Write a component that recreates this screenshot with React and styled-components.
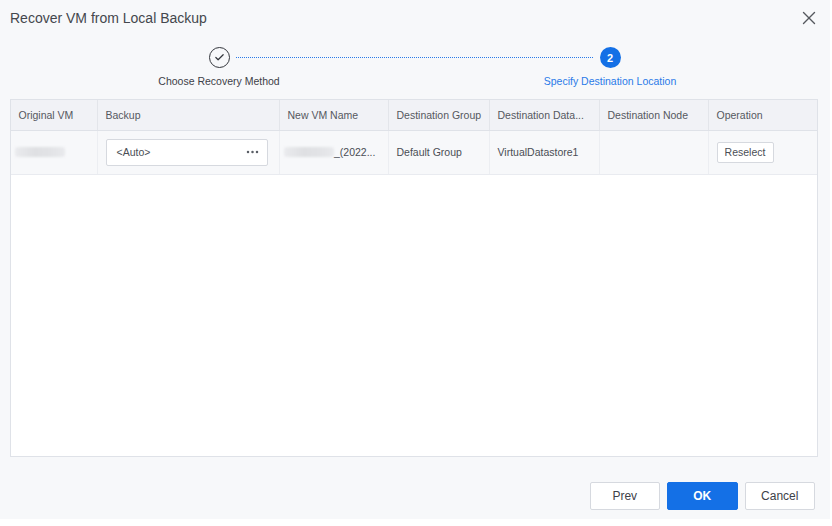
import React from 'react';
import styled, { createGlobalStyle } from 'styled-components';
import { X, Check } from 'lucide-react';

const GlobalStyle = createGlobalStyle`
  html, body {
    margin: 0;
    padding: 0;
    background: #fff;
    font-family: "Liberation Sans", Arial, sans-serif;
  }
`;

const columns = [
  { title: 'Original VM', width: 87 },
  { title: 'Backup', width: 182 },
  { title: 'New VM Name', width: 109 },
  { title: 'Destination Group', width: 101 },
  { title: 'Destination Data...', width: 110 },
  { title: 'Destination Node', width: 109 },
  { title: 'Operation', width: 109 },
];

const App = () => {
  return (
    <>
      <GlobalStyle />
      <Dialog>
        <Header>
          <Title>Recover VM from Local Backup</Title>
          <CloseButton>
            <X size={22} strokeWidth={1.5} />
          </CloseButton>
        </Header>

        <Steps>
          <Step>
            <DoneCircle>
              <Check size={11} strokeWidth={2.6} />
            </DoneCircle>
            <StepLabel>Choose Recovery Method</StepLabel>
          </Step>
          <StepLine />
          <Step>
            <ActiveCircle>2</ActiveCircle>
            <StepLabel $active>Specify Destination Location</StepLabel>
          </Step>
        </Steps>

        <Table>
          <HeadRow>
            {columns.map((col) => (
              <HeadCell key={col.title} $width={col.width}>
                {col.title}
              </HeadCell>
            ))}
          </HeadRow>
          <BodyRow>
            <Cell $width={87}>
              <Blur $width={50} />
            </Cell>
            <Cell $width={182}>
              <BackupField>
                <span>&lt;Auto&gt;</span>
                <svg width="13" height="4" viewBox="0 0 13 4" fill="#5a5e65">
                  <circle cx="2" cy="2" r="1.25" />
                  <circle cx="6.5" cy="2" r="1.25" />
                  <circle cx="11" cy="2" r="1.25" />
                </svg>
              </BackupField>
            </Cell>
            <Cell $width={109}>
              <Blur $width={50} />
              <span>_(2022...</span>
            </Cell>
            <Cell $width={101}>Default Group</Cell>
            <Cell $width={110}>VirtualDatastore1</Cell>
            <Cell $width={109} />
            <Cell $width={109}>
              <SmallButton>Reselect</SmallButton>
            </Cell>
          </BodyRow>
        </Table>

        <Footer>
          <FooterButton>Prev</FooterButton>
          <FooterButton $primary>OK</FooterButton>
          <FooterButton>Cancel</FooterButton>
        </Footer>
      </Dialog>
    </>
  );
};

export default App;

const Dialog = styled.div`
  width: 830px;
  height: 519px;
  background: #f7f8fa;
  box-sizing: border-box;
  padding: 0 12px 0 10px;
  display: flex;
  flex-direction: column;
`;

const Header = styled.div`
  height: 36px;
  display: flex;
  align-items: center;
  justify-content: space-between;
`;

const Title = styled.div`
  font-size: 14px;
  color: #44474d;
`;

const CloseButton = styled.div`
  display: flex;
  color: #55585e;
  margin-right: -2px;
`;

const Steps = styled.div`
  height: 63px;
  padding: 11px 0 0 148px;
  box-sizing: border-box;
  display: flex;
  align-items: flex-start;
`;

const Step = styled.div`
  width: 122px;
  display: flex;
  flex-direction: column;
  align-items: center;
  flex-shrink: 0;
`;

const StepLine = styled.div`
  width: 357px;
  margin: 10px -44px 0;
  border-top: 1px dotted #2a7ae8;
  flex-shrink: 0;
`;

const DoneCircle = styled.div`
  width: 21px;
  height: 21px;
  box-sizing: border-box;
  border: 1.2px solid #33363c;
  border-radius: 50%;
  display: flex;
  align-items: center;
  justify-content: center;
  color: #33363c;
`;

const ActiveCircle = styled.div`
  width: 21px;
  height: 21px;
  border-radius: 50%;
  background: #1470e6;
  color: #fff;
  font-size: 11px;
  font-weight: bold;
  display: flex;
  align-items: center;
  justify-content: center;
`;

const StepLabel = styled.div`
  margin-top: 6px;
  font-size: 10.5px;
  line-height: 14px;
  white-space: nowrap;
  color: ${(p) => (p.$active ? '#2a7ae8' : '#3d4148')};
`;

const Table = styled.div`
  width: 808px;
  height: 358px;
  box-sizing: border-box;
  border: 1px solid #dfe2e8;
  background: #fff;
`;

const HeadRow = styled.div`
  display: flex;
  height: 30px;
  background: #f1f2f6;
  border-bottom: 1px solid #dfe2e8;
`;

const BodyRow = styled.div`
  display: flex;
  height: 43px;
  background: #f7f8fa;
  border-bottom: 1px solid #e9ebf0;
`;

const HeadCell = styled.div`
  width: ${(p) => p.$width}px;
  flex-shrink: 0;
  box-sizing: border-box;
  padding-left: 7.5px;
  display: flex;
  align-items: center;
  font-size: 10.5px;
  color: #55585e;
  white-space: nowrap;
  border-right: 1px solid #e3e5ea;

  &:last-child {
    border-right: none;
  }
`;

const Cell = styled.div`
  width: ${(p) => p.$width}px;
  flex-shrink: 0;
  box-sizing: border-box;
  padding: 0 0 1px 7.5px;
  display: flex;
  align-items: center;
  font-size: 10.5px;
  color: #4a4e55;
  white-space: nowrap;
  border-right: 1px solid #eceef2;

  &:last-child {
    border-right: none;
  }
`;

const Blur = styled.div`
  width: ${(p) => p.$width}px;
  height: 10px;
  margin-left: -3.5px;
  background: linear-gradient(90deg, #eaebee, #dfe0e3 40%, #e2e3e6 70%, #e9eaed);
  border-radius: 3px;
  filter: blur(0.8px);
`;

const BackupField = styled.div`
  width: 162px;
  height: 27px;
  box-sizing: border-box;
  border: 1px solid #d6d9df;
  border-radius: 2px;
  background: #fff;
  padding: 0 8px 0 10px;
  display: flex;
  align-items: center;
  justify-content: space-between;
`;

const SmallButton = styled.div`
  width: 57px;
  height: 21px;
  box-sizing: border-box;
  border: 1px solid #d6d9df;
  border-radius: 2px;
  background: #fff;
  display: flex;
  align-items: center;
  justify-content: center;
`;

const Footer = styled.div`
  padding-top: 25px;
  display: flex;
  justify-content: flex-end;
  gap: 7px;
  margin-right: 3px;
`;

const FooterButton = styled.div`
  width: 70.5px;
  height: 28px;
  box-sizing: border-box;
  padding-bottom: 1px;
  border: 1px solid ${(p) => (p.$primary ? '#1470e6' : '#d6d9df')};
  border-radius: 2px;
  background: ${(p) => (p.$primary ? '#1470e6' : '#fff')};
  color: ${(p) => (p.$primary ? '#fff' : '#3d4148')};
  font-size: 12px;
  font-weight: ${(p) => (p.$primary ? 'bold' : 'normal')};
  display: flex;
  align-items: center;
  justify-content: center;
`;
